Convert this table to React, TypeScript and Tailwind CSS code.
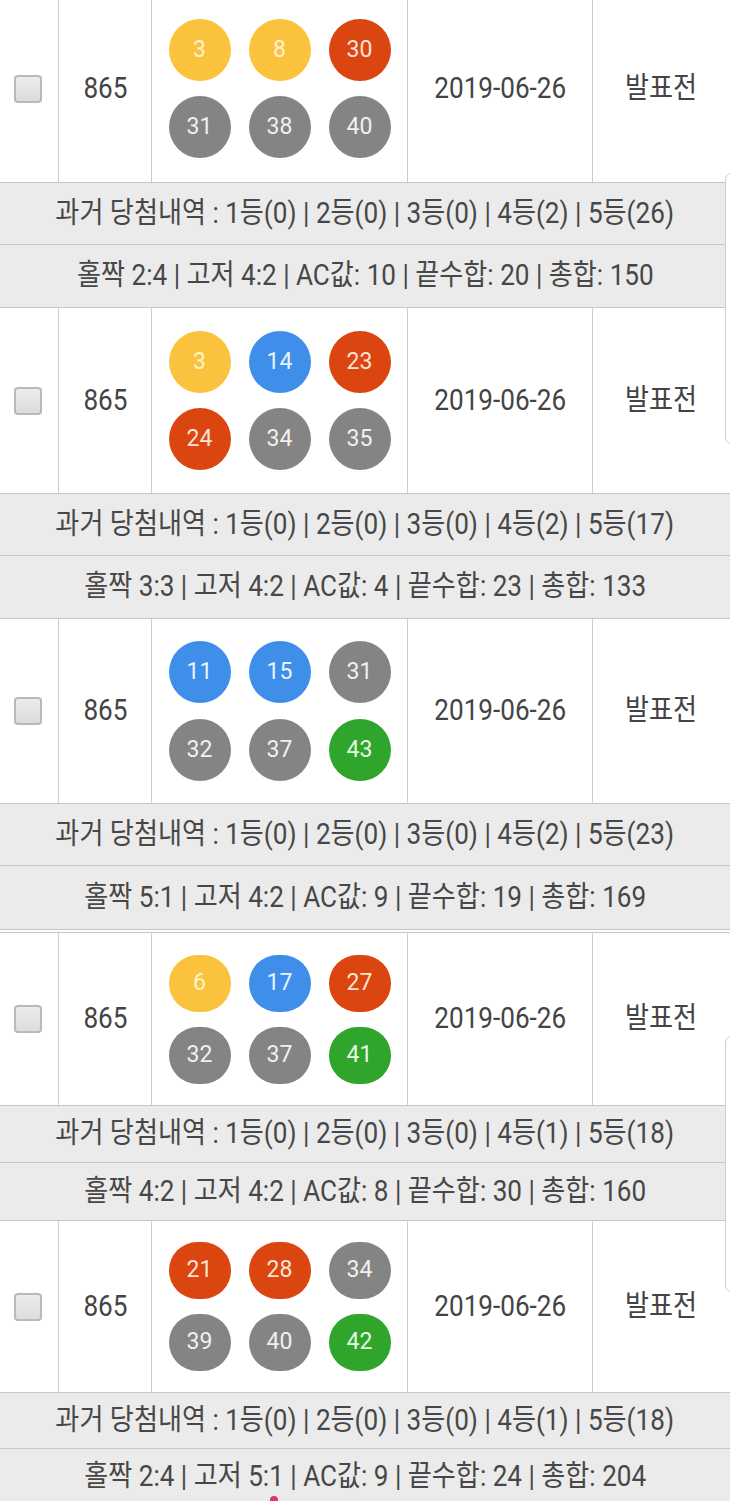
import React from 'react'

type Row = {
  balls: number[]
  hist: string
  stats: string
  h: string
  g1: string
  g2: string
  ballH: string
  gapY: string
}

const rows: Row[] = [
  {
    balls: [3, 8, 30, 31, 38, 40],
    hist: '1등(0) | 2등(0) | 3등(0) | 4등(2) | 5등(26)',
    stats: '홀짝 2:4 | 고저 4:2 | AC값: 10 | 끝수합: 20 | 총합: 150',
    h: 'h-[187px] -mt-[5px]',
    g1: 'h-[63px]',
    g2: 'h-[63px]',
    ballH: 'h-[62px]',
    gapY: 'gap-[15px]',
  },
  {
    balls: [3, 14, 23, 24, 34, 35],
    hist: '1등(0) | 2등(0) | 3등(0) | 4등(2) | 5등(17)',
    stats: '홀짝 3:3 | 고저 4:2 | AC값: 4 | 끝수합: 23 | 총합: 133',
    h: 'h-[185px]',
    g1: 'h-[63px]',
    g2: 'h-[63px]',
    ballH: 'h-[62px]',
    gapY: 'gap-[15px]',
  },
  {
    balls: [11, 15, 31, 32, 37, 43],
    hist: '1등(0) | 2등(0) | 3등(0) | 4등(2) | 5등(23)',
    stats: '홀짝 5:1 | 고저 4:2 | AC값: 9 | 끝수합: 19 | 총합: 169',
    h: 'h-[184px]',
    g1: 'h-[63px]',
    g2: 'h-[64px]',
    ballH: 'h-[62px]',
    gapY: 'gap-[16px]',
  },
  {
    balls: [6, 17, 27, 32, 37, 41],
    hist: '1등(0) | 2등(0) | 3등(0) | 4등(1) | 5등(18)',
    stats: '홀짝 4:2 | 고저 4:2 | AC값: 8 | 끝수합: 30 | 총합: 160',
    h: 'h-[172px]',
    g1: 'h-[58px]',
    g2: 'h-[58px]',
    ballH: 'h-[57px]',
    gapY: 'gap-[15px]',
  },
  {
    balls: [21, 28, 34, 39, 40, 42],
    hist: '1등(0) | 2등(0) | 3등(0) | 4등(1) | 5등(18)',
    stats: '홀짝 2:4 | 고저 5:1 | AC값: 9 | 끝수합: 24 | 총합: 204',
    h: 'h-[171px]',
    g1: 'h-[57px]',
    g2: 'h-[57px]',
    ballH: 'h-[57px]',
    gapY: 'gap-[15px]',
  },
]

function ballColor(n: number) {
  if (n <= 10) return 'bg-[#fbc23d] text-[#fff3cf]'
  if (n <= 20) return 'bg-[#3f8ee9] text-[#eaf3ff]'
  if (n <= 30) return 'bg-[#da4510] text-[#fde3d6]'
  if (n <= 40) return 'bg-[#848484] text-[#f0f0f0]'
  return 'bg-[#2fa52b] text-[#e6f7e3]'
}

function Ball({ n, h }: { n: number; h: string }) {
  return (
    <div
      className={`flex w-[62px] ${h} items-center justify-center rounded-full text-[23px] ${ballColor(n)}`}
    >
      {n}
    </div>
  )
}

function Narrow({ children }: { children: React.ReactNode }) {
  return <span className="inline-block whitespace-nowrap scale-x-[0.9]">{children}</span>
}

function Checkbox() {
  return (
    <div className="h-[28px] w-[28px] rounded-[4px] border-2 border-[#b9b9b9] bg-gradient-to-b from-[#ececec] to-[#dcdcdc]" />
  )
}

function DrawRow({ row }: { row: Row }) {
  return (
    <div>
      <div className={`flex ${row.h} bg-white text-[29px] text-[#444]`}>
        <div className="flex w-[59px] items-center justify-center border-r border-[#cdcdcd] pr-[3px]">
          <Checkbox />
        </div>
        <div className="flex w-[93px] items-center justify-center border-r border-[#cdcdcd]">
          <Narrow>865</Narrow>
        </div>
        <div className={`flex w-[256px] flex-col items-center justify-center border-r border-[#cdcdcd] ${row.gapY}`}>
          <div className="flex gap-[18px]">
            {row.balls.slice(0, 3).map((b) => (
              <Ball key={b} n={b} h={row.ballH} />
            ))}
          </div>
          <div className="flex gap-[18px]">
            {row.balls.slice(3).map((b) => (
              <Ball key={b} n={b} h={row.ballH} />
            ))}
          </div>
        </div>
        <div className="flex w-[185px] items-center justify-center border-r border-[#cdcdcd]">
          <Narrow>2019-06-26</Narrow>
        </div>
        <div className="flex flex-1 items-center justify-center">
          <Narrow>발표전</Narrow>
        </div>
      </div>
      <div
        className={`flex ${row.g1} items-center justify-center border-y border-[#c6c6c6] bg-[#ebebeb] text-[29px] text-[#474747]`}
      >
        <Narrow>과거 당첨내역 : {row.hist}</Narrow>
      </div>
      <div
        className={`flex ${row.g2} items-center justify-center border-b border-[#c6c6c6] bg-[#ebebeb] text-[29px] text-[#474747]`}
      >
        <Narrow>{row.stats}</Narrow>
      </div>
    </div>
  )
}

export default function App() {
  return (
    <div
      className="relative h-[1501px] w-[730px] overflow-hidden bg-white"
      style={{ fontFamily: 'Roboto, "Noto Sans CJK KR", sans-serif' }}
    >
      {rows.slice(0, 3).map((r, i) => (
        <DrawRow key={i} row={r} />
      ))}
      <div className="h-[3px] border-b border-[#c6c6c6] bg-white" />
      {rows.slice(3).map((r, i) => (
        <DrawRow key={i + 3} row={r} />
      ))}

      <div className="absolute left-[725px] top-[172px] h-[273px] w-[20px] rounded-l-[8px] border border-[#cfcfcf] bg-white" />
      <div className="absolute left-[725px] top-[1035px] h-[258px] w-[20px] rounded-l-[8px] border border-[#cfcfcf] bg-white" />
      <div className="absolute left-[270px] top-[1496px] h-[8px] w-[8px] rounded-full bg-[#e0307a]" />
    </div>
  )
}
